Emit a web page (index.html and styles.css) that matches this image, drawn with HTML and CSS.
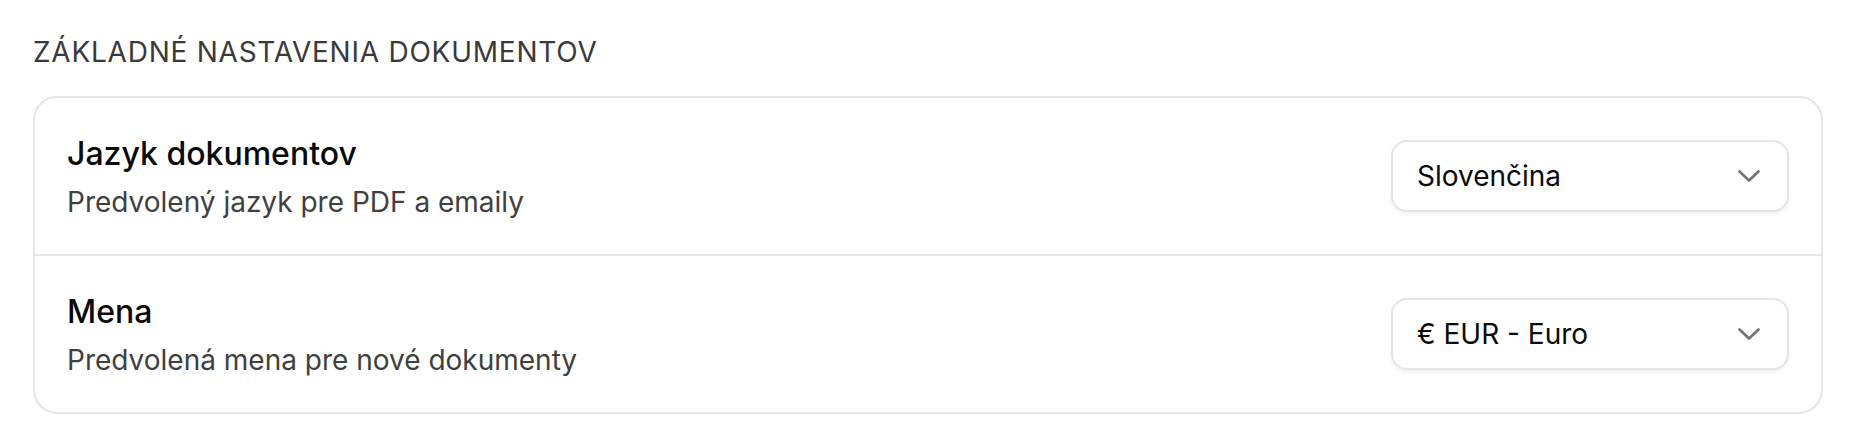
FILE: index.html
```html
<!DOCTYPE html>
<html lang="sk">
<head>
<meta charset="utf-8">
<title>Základné nastavenia dokumentov</title>
<link rel="stylesheet" href="styles.css">
</head>
<body>
<main class="page">
  <h2 class="section-title">Základné nastavenia dokumentov</h2>
  <div class="card">
    <div class="row">
      <div class="text">
        <div class="title">Jazyk dokumentov</div>
        <div class="desc">Predvolený jazyk pre PDF a emaily</div>
      </div>
      <div class="select">
        <span class="value">Slovenčina</span>
        <svg class="chevron" width="22" height="12" viewBox="0 0 22 12" fill="none"><polyline points="1.5,1.5 11,10.5 20.5,1.5" stroke="currentColor" stroke-width="2.6" stroke-linecap="round" stroke-linejoin="round"/></svg>
      </div>
    </div>
    <div class="row">
      <div class="text">
        <div class="title">Mena</div>
        <div class="desc">Predvolená mena pre nové dokumenty</div>
      </div>
      <div class="select">
        <span class="value">€ EUR - Euro</span>
        <svg class="chevron" width="22" height="12" viewBox="0 0 22 12" fill="none"><polyline points="1.5,1.5 11,10.5 20.5,1.5" stroke="currentColor" stroke-width="2.6" stroke-linecap="round" stroke-linejoin="round"/></svg>
      </div>
    </div>
  </div>
</main>
</body>
</html>
```

FILE: styles.css
```css
* { box-sizing: border-box; }
html, body { margin: 0; padding: 0; background: #ffffff; }
body {
  font-family: Inter, "Noto Sans", "Liberation Sans", sans-serif;
  color: #0a0a0a;
}
.page {
  padding: 32px 33px;
}
.section-title {
  margin: 0 0 24px 0;
  font-size: 28px;
  line-height: 40px;
  font-weight: 400;
  text-transform: uppercase;
  letter-spacing: 0.027em;
  color: #3a3a3a;
}
.card {
  border: 2px solid #e5e5e5;
  border-radius: 24px;
  background: #ffffff;
}
.row {
  display: flex;
  align-items: center;
  justify-content: space-between;
  padding: 32px 32px;
}
.row + .row {
  border-top: 2px solid #e5e5e5;
}
.text {
  display: flex;
  flex-direction: column;
  gap: 4px;
}
.title {
  font-size: 32px;
  line-height: 48px;
  font-weight: 500;
  color: #0a0a0a;
}
.desc {
  font-size: 28px;
  line-height: 40px;
  color: #404040;
}
.select {
  width: 398px;
  height: 72px;
  display: flex;
  align-items: center;
  justify-content: space-between;
  padding: 0 27px 0 24px;
  border: 2px solid #e5e5e5;
  border-radius: 16px;
  background: #ffffff;
  box-shadow: 0 2px 4px rgba(0, 0, 0, 0.06);
}
.value {
  font-size: 28px;
  line-height: 40px;
  color: #0a0a0a;
}
.chevron {
  color: #737373;
  display: block;
}
```
